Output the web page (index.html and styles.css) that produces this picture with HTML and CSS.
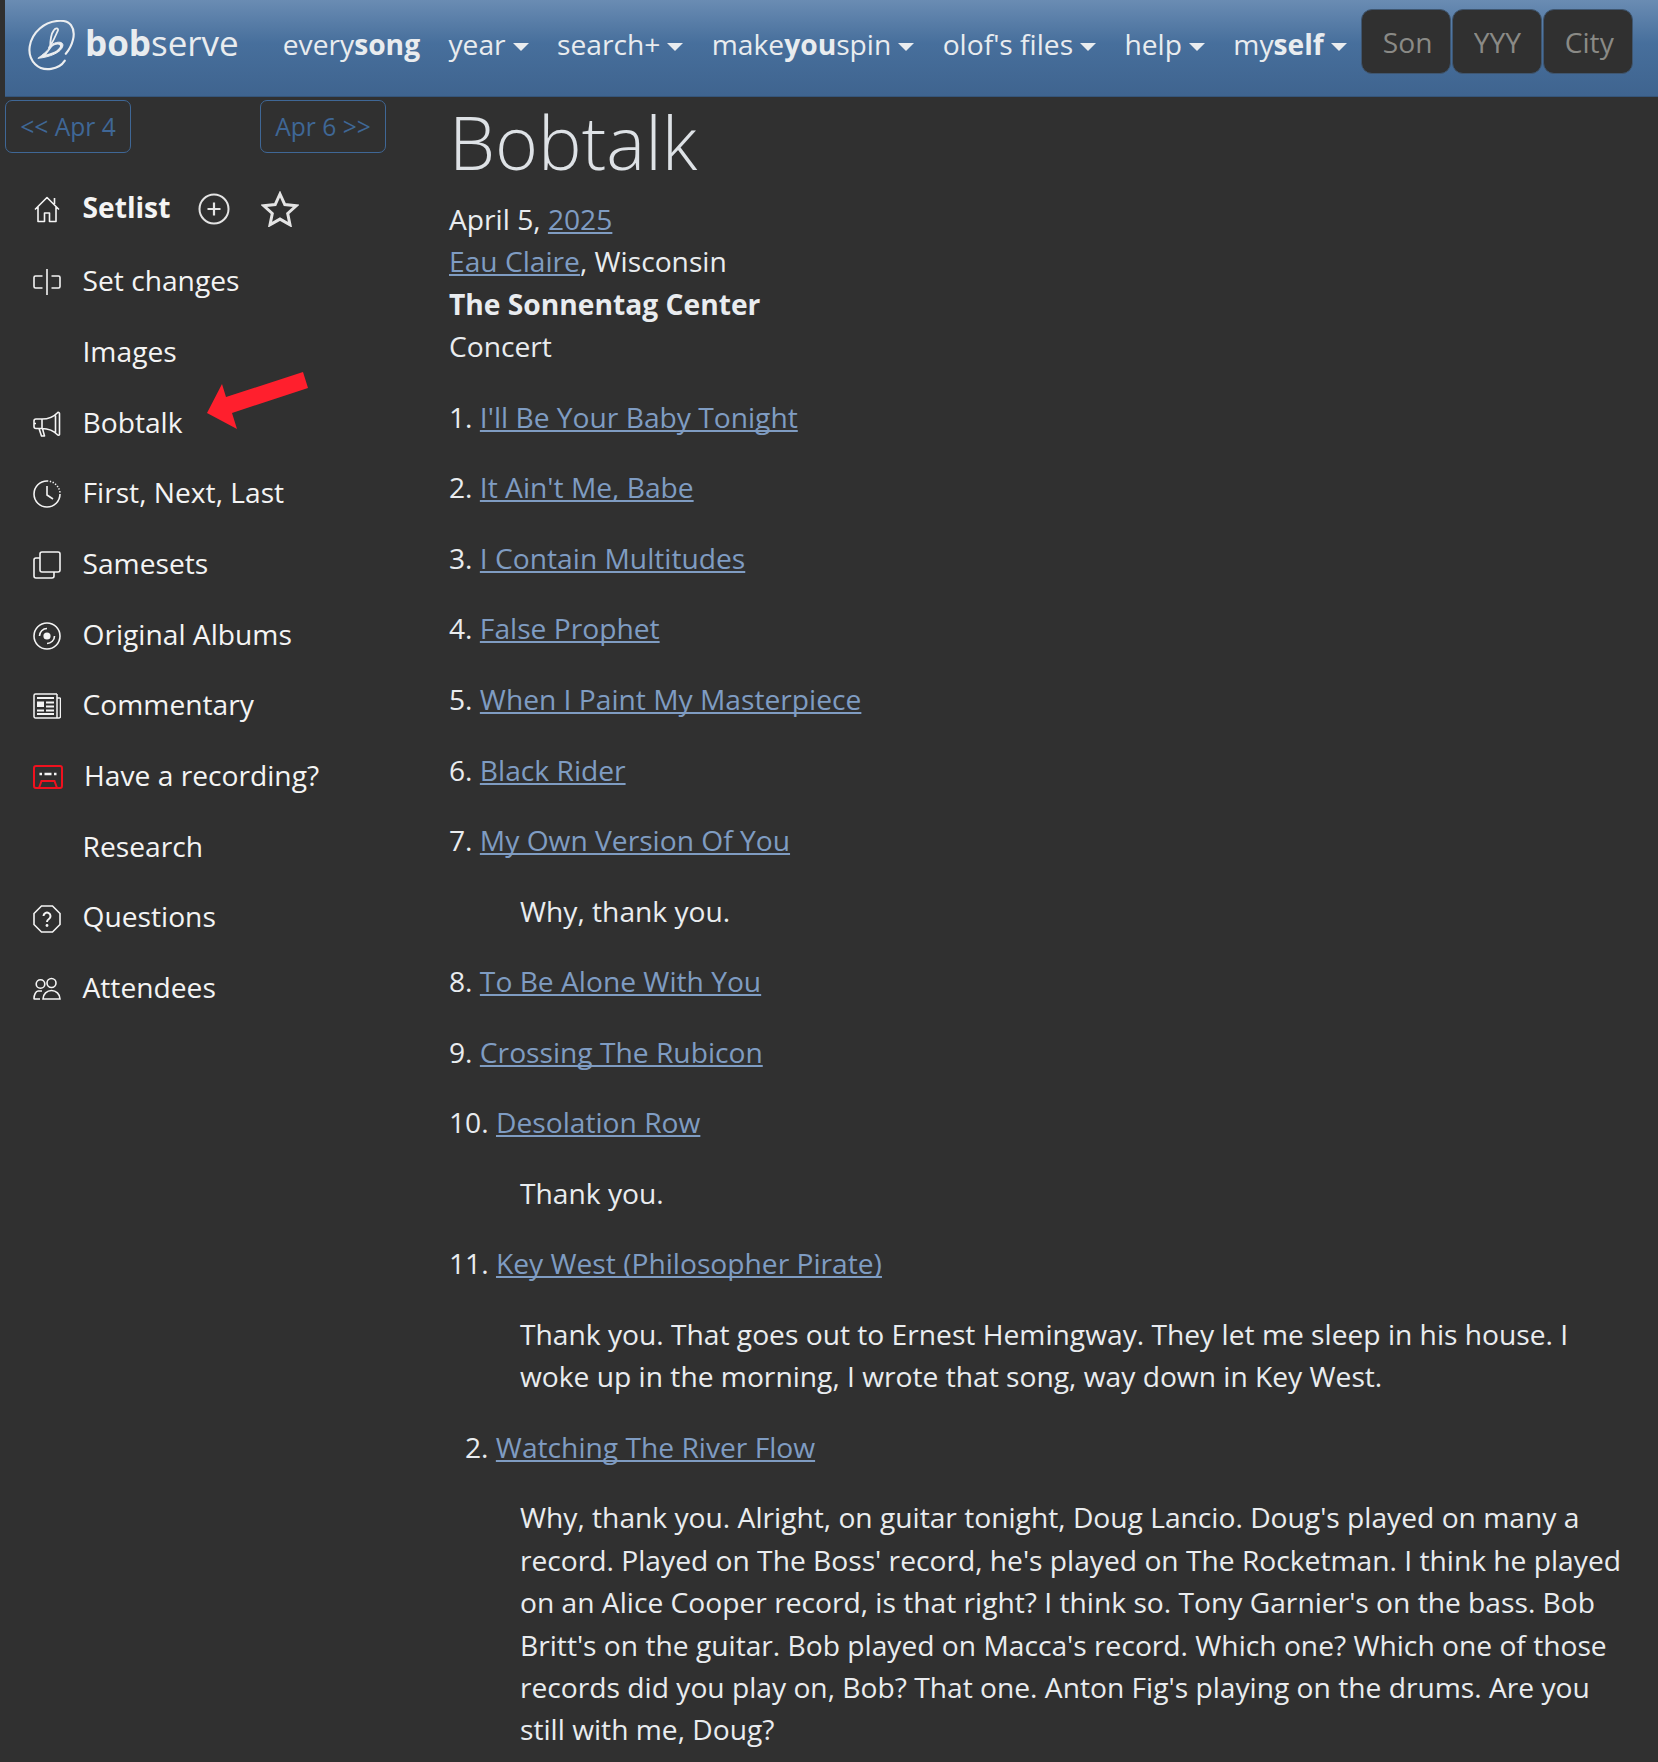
FILE: index.html
```html
<!DOCTYPE html>
<html lang="en">
<head>
  <meta charset="UTF-8">
  <title>Bobtalk</title>
  <link rel="stylesheet" href="styles.css">
</head>
<body>
  <nav class="topbar">
    <a class="brand" href="#">
      <svg class="logo" viewBox="25 30 142 160" fill="none" stroke="#eceef0" stroke-width="6.500" stroke-linecap="round" stroke-linejoin="round">
        <path d="M137 155C120 182 72 192 46 166C16 136 26 86 60 56C90 30 140 24 156 46C174 70 160 110 140 134"/>
        <path d="M88 116C100 100 110 74 116 62C118 54 108 54 103 62C92 76 92 100 92 116" stroke-width="5.500"/>
        <path d="M88 112C104 96 134 92 131 110C126 130 92 144 54 148C70 136 82 126 90 116" fill="#eceef0" stroke-width="3"/>
        <path d="M98 112C108 104 124 102 122 112C116 124 100 130 80 136" fill="#4a719d" stroke="none"/>
      </svg>
      <span><b>bob</b>serve</span>
    </a>
    <ul class="menu">
      <li>every<b>song</b></li>
      <li class="drop">year</li>
      <li class="drop">search+</li>
      <li class="drop">make<b>you</b>spin</li>
      <li class="drop">olof's files</li>
      <li class="drop">help</li>
      <li class="drop">my<b>self</b></li>
    </ul>
    <form class="quick">
      <input type="text" placeholder="Son">
      <input type="text" placeholder="YYY">
      <input type="text" placeholder="City">
    </form>
  </nav>

  <div class="page">
    <aside class="side">
      <div class="pager">
        <a class="pager-btn" href="#">&lt;&lt; Apr 4</a>
        <a class="pager-btn" href="#">Apr 6 &gt;&gt;</a>
      </div>
      <ul class="side-nav">
        <li class="current">
          <svg class="ico" viewBox="0 0 28 28" fill="none" stroke="currentColor" stroke-width="1.600" stroke-linejoin="round"><path d="M2 14.500L14 2.500l12 12M5 12v14.500h6.500V18h5v8.500H23V12M21.500 3v6"/></svg>
          <span>Setlist</span>
          <svg class="tool tool-add" viewBox="0 0 32 32" fill="none" stroke="#e4e4e4" stroke-width="2"><circle cx="16" cy="16" r="14.500"/><path d="M16 9.500v13M9.500 16h13" stroke-width="2.200"/></svg>
          <svg class="tool tool-star" viewBox="0 0 38 36" fill="none" stroke="#e4e4e4" stroke-width="3"><path d="M19 3l4.800 10.500 11.400 1.300-8.500 7.700 2.300 11.300L19 28.100 9 33.800l2.300-11.300-8.500-7.700 11.400-1.300z"/></svg>
        </li>
        <li>
          <svg class="ico" viewBox="0 0 28 28" fill="none" stroke="currentColor" stroke-width="1.600"><path d="M9.500 8H2.500A1.500 1.500 0 0 0 1 9.500v9A1.500 1.500 0 0 0 2.500 20h7M18.500 8h7A1.500 1.500 0 0 1 27 9.500v9a1.500 1.500 0 0 1-1.500 1.500h-7M14 1v26"/></svg>
          <span>Set changes</span>
        </li>
        <li class="no-ico"><span>Images</span></li>
        <li>
          <svg class="ico" viewBox="0 0 28 28" fill="none" stroke="currentColor" stroke-width="1.600" stroke-linejoin="round"><path d="M26.500 3.500v21c0 1-1.500 1-2 .3C21 21 15 18.500 9 18.500H3a2 2 0 0 1-2-2V11a2 2 0 0 1 2-2h6c6 0 12-2.500 15.500-6.300.5-.7 2-.2 2 .8zM22.500 5.500v17M9 9v9.500M6 18.500l2.500 7.500h3l-2-7.400M1 13.500h2"/></svg>
          <span>Bobtalk</span>
          <svg class="arrow" viewBox="0 0 102 57" fill="#ff1f2d"><path d="M0 41L15 12l4 13L96 0l5 16-76 25 5 16z"/></svg>
        </li>
        <li>
          <svg class="ico" viewBox="0 0 28 28" fill="none" stroke="currentColor" stroke-width="1.600"><path d="M14 1A13 13 0 1 0 27 14" /><path d="M14 1A13 13 0 0 1 27 14" stroke-dasharray="1.300 1.600"/><path d="M14 6v9l6 4" stroke-width="1.600"/></svg>
          <span>First, Next, Last</span>
        </li>
        <li>
          <svg class="ico" viewBox="0 0 28 28" fill="none" stroke="currentColor" stroke-width="1.600"><rect x="7" y="1" width="20" height="20" rx="2"/><path d="M7 7H3a2 2 0 0 0-2 2v16a2 2 0 0 0 2 2h16a2 2 0 0 0 2-2v-4"/></svg>
          <span>Samesets</span>
        </li>
        <li>
          <svg class="ico" viewBox="0 0 28 28" fill="none" stroke="currentColor" stroke-width="1.600"><circle cx="14" cy="14" r="13"/><circle cx="14" cy="14" r="2.800" fill="currentColor"/><path d="M14 6.500A7.500 7.500 0 0 0 6.500 14M14 21.500a7.500 7.500 0 0 0 7.500-7.500"/></svg>
          <span>Original Albums</span>
        </li>
        <li>
          <svg class="ico" viewBox="0 0 28 26" fill="none" stroke="currentColor" stroke-width="1.500"><path d="M24 1H2.500A1.500 1.500 0 0 0 1 2.500v21A1.500 1.500 0 0 0 2.500 25H26a1.500 1.500 0 0 0 1.500-1.500V5M24 1v24M24 5h3.500"/><path d="M4 5h17M13 9.500h8M13 13.500h8M13 17.500h8M4 17.500h7M4 21h17" stroke-width="1.800"/><rect x="4" y="8.500" width="7" height="5.500" fill="currentColor" stroke="none"/></svg>
          <span>Commentary</span>
        </li>
        <li class="rec">
          <svg class="ico ico-rec" viewBox="0 0 30 24"><rect x="1" y="1" width="28" height="22" rx="2" fill="none" stroke="#f0111e" stroke-width="2"/><path d="M6 23l2.500-7h13l2.500 7" fill="none" stroke="#f0111e" stroke-width="2"/><path d="M6.500 9h2.500M11.500 9h7M21 9h2.500" stroke="#f4f4f4" stroke-width="2.600"/></svg>
          <span>Have a recording?</span>
        </li>
        <li class="no-ico"><span>Research</span></li>
        <li>
          <svg class="ico" viewBox="0 0 28 28" fill="none" stroke="currentColor" stroke-width="1.600"><path d="M8.500 1h11L27 8.500v11L19.500 27h-11L1 19.500v-11z"/><path d="M10.500 11a3.500 3.500 0 1 1 5.400 3c-1.400.9-1.900 1.500-1.900 3" stroke-width="2"/><circle cx="14" cy="20.500" r="1.400" fill="currentColor" stroke="none"/></svg>
          <span>Questions</span>
        </li>
        <li>
          <svg class="ico" viewBox="0 0 28 22" fill="none" stroke="currentColor" stroke-width="1.600"><circle cx="7.500" cy="6" r="4.300"/><circle cx="18.500" cy="5" r="4.500"/><path d="M9 13H5c-2 0-4 4-4 7.500a.5.5 0 0 0 .5.5H7M10 21c0-5 4-8.500 8.500-8.500S27 16 27 21z"/></svg>
          <span>Attendees</span>
        </li>
      </ul>
    </aside>

    <main class="content">
      <h1 class="title">Bobtalk</h1>
      <p class="meta">
        April 5, <a href="#">2025</a><br>
        <a href="#">Eau Claire</a>, Wisconsin<br>
        <b>The Sonnentag Center</b><br>
        Concert
      </p>
      <p>1. <a href="#">I'll Be Your Baby Tonight</a></p>
      <p>2. <a href="#">It Ain't Me, Babe</a></p>
      <p>3. <a href="#">I Contain Multitudes</a></p>
      <p>4. <a href="#">False Prophet</a></p>
      <p>5. <a href="#">When I Paint My Masterpiece</a></p>
      <p>6. <a href="#">Black Rider</a></p>
      <p>7. <a href="#">My Own Version Of You</a></p>
      <p class="talk">Why, thank you.</p>
      <p>8. <a href="#">To Be Alone With You</a></p>
      <p>9. <a href="#">Crossing The Rubicon</a></p>
      <p>10. <a href="#">Desolation Row</a></p>
      <p class="talk">Thank you.</p>
      <p>11. <a href="#">Key West (Philosopher Pirate)</a></p>
      <p class="talk">Thank you. That goes out to Ernest Hemingway. They let me sleep in his house. I woke up in the morning, I wrote that song, way down in Key West.</p>
      <p class="encore">2. <a href="#">Watching The River Flow</a></p>
      <p class="talk">Why, thank you. Alright, on guitar tonight, Doug Lancio. Doug's played on many a record. Played on The Boss' record, he's played on The Rocketman. I think he played on an Alice Cooper record, is that right? I think so. Tony Garnier's on the bass. Bob Britt's on the guitar. Bob played on Macca's record. Which one? Which one of those records did you play on, Bob? That one. Anton Fig's playing on the drums. Are you still with me, Doug?</p>
    </main>
  </div>
</body>
</html>
```

FILE: styles.css
```css
* {
  box-sizing: border-box;
}
html, body {
  margin: 0;
  height: 1762px;
  overflow: hidden;
}
body {
  background: #303030;
  color: #e9ecef;
  font-family: "Open Sans", sans-serif;
  font-size: 28.2px;
  line-height: 42.4px;
}
a {
  color: #7f9cc2;
  text-decoration-skip-ink: none;
}
ul {
  list-style: none;
  margin: 0;
  padding: 0;
}

/* top bar */
.topbar {
  display: flex;
  align-items: flex-start;
  height: 97px;
  margin-left: 5px;
  padding: 9px 24px 0 23px;
  background: linear-gradient(#6a8cb3, #476f9c 45%, #3f648f);
  border-bottom: 1px solid #35557a;
}
.brand {
  display: flex;
  align-items: center;
  gap: 10px;
  color: #e9ecef;
  text-decoration: none;
  font-size: 35px;
  height: 68px;
}
.logo {
  width: 47px;
  height: 52px;
  margin-top: 6px;
}
.menu {
  display: flex;
  gap: 28.400px;
  margin-left: 44px;
  padding-top: 14px;
  color: #e9ecef;
}
.drop::after {
  content: "";
  display: inline-block;
  margin-left: 7px;
  vertical-align: 4px;
  border-top: 8px solid #e9ecef;
  border-left: 8px solid transparent;
  border-right: 8px solid transparent;
}
.quick {
  display: flex;
  gap: 1px;
  margin-left: 14px;
}
.quick input {
  width: 90px;
  height: 65px;
  padding: 0 0 0 21px;
  background: #303030;
  border: 1px solid #3f5670;
  border-radius: 11px;
  font: inherit;
  color: #e9ecef;
}
.quick input::placeholder {
  color: #8a8a86;
  opacity: 1;
}

/* left column */
.page {
  display: flex;
}
.side {
  width: 449px;
  flex: none;
  padding-left: 5px;
}
.pager {
  display: flex;
  justify-content: space-between;
  width: 381px;
  padding-top: 3px;
}
.pager-btn {
  display: block;
  width: 126px;
  height: 53px;
  border: 1px solid #3f6796;
  border-radius: 7px;
  color: #3f6796;
  text-decoration: none;
  text-align: center;
  font-size: 24.600px;
  line-height: 51px;
}
.side-nav {
  margin-top: 21.300px;
  padding-left: 28px;
}
.side-nav li {
  display: flex;
  align-items: center;
  height: 70.700px;
  color: #f4f4f4;
}
.ico {
  width: 28px;
  height: 28px;
  margin-top: 4px;
  margin-right: 21.500px;
  flex: none;
}
.no-ico {
  padding-left: 49.500px;
}
.side-nav .current {
  height: 66px;
  margin-top: -.3px;
  margin-bottom: 5px;
}
.current span {
  font-weight: 700;
}
.tool {
  margin-top: 4px;
}
.tool-add {
  width: 32px;
  height: 32px;
  margin-left: 28px;
}
.tool-star {
  width: 38px;
  height: 36px;
  margin-left: 31px;
}
.arrow {
  width: 102px;
  height: 57px;
  margin-left: 24px;
  margin-top: -42px;
}
.ico-rec {
  width: 30px;
  height: 24px;
  margin-right: 21px;
}

/* main column */
.content {
  flex: 1;
  padding-right: 20px;
}
.title {
  margin: -1px 0 10px;
  color: #dee2e6;
  font-size: 73.400px;
  font-weight: 300;
  line-height: 92px;
}
.content p {
  margin: 0 0 28.150px;
}
.content .talk {
  padding-left: 71px;
}
.content .encore {
  padding-left: 16px;
}
```
